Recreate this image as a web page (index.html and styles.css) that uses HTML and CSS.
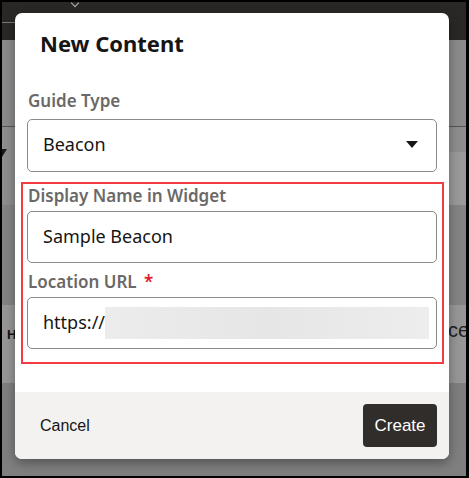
FILE: index.html
```html
<!DOCTYPE html>
<html lang="en">
<head>
<meta charset="utf-8">
<title>New Content</title>
<link rel="stylesheet" href="styles.css">
</head>
<body>
<div class="frame">
  <div class="backdrop">
    <div class="topbar"><span class="chev"></span><span class="topline"></span></div>
    <div class="band b1"></div>
    <div class="band b2"><span class="tri"></span></div>
    <div class="band b3"></div>
    <div class="band b4"><span class="hicon">H</span><span class="ce">ce</span></div>
    <div class="band b5"></div>
  </div>
  <div class="dialog">
    <h1 class="title">New Content</h1>
    <div class="body">
      <div class="field first">
        <label class="label">Guide Type</label>
        <div class="input select"><span>Beacon</span>
          <svg class="caret" width="12" height="7" viewBox="0 0 12 7"><path d="M0 0H12L6 7Z" fill="#161513"/></svg>
        </div>
      </div>
      <div class="highlight">
        <div class="field">
          <label class="label">Display Name in Widget</label>
          <div class="input"><span>Sample Beacon</span></div>
        </div>
        <div class="field">
          <label class="label">Location URL <span class="req">*</span></label>
          <div class="input"><span>https://</span><span class="blur"></span></div>
        </div>
      </div>
    </div>
    <div class="footer">
      <button class="btn cancel">Cancel</button>
      <button class="btn create">Create</button>
    </div>
  </div>
</div>
</body>
</html>
```
FILE: styles.css
```css
* { box-sizing: border-box; }
html, body { margin: 0; padding: 0; }
body { width: 469px; height: 478px; overflow: hidden; background: #000; }
.frame {
  position: relative;
  width: 469px; height: 478px;
  border-style: solid; border-color: #000;
  border-width: 2px 3px 2px 2px;
  overflow: hidden;
}
.backdrop { display: flex; flex-direction: column; height: 100%; }
.topbar { height: 38px; background: #2a2826; position: relative; flex: none; }
.chev {
  position: absolute; left: 70px; top: -2px; width: 6px; height: 6px;
  border-right: 1.5px solid #b9b6b2; border-bottom: 1.5px solid #b9b6b2;
  transform: rotate(45deg);
}
.topline { position: absolute; left: 0; top: 20px; width: 14px; height: 1px; background: #777; }
.band { flex: none; position: relative; }
.b1 { height: 87px; background: #8b8b8b; border-bottom: 1px solid #555; }
.b2 { height: 78px; background: #8e8e8e; }
.b2::after { content: ""; position: absolute; right: 0; top: 25px; width: 30px; height: 53px; background: #9a9a9a; }
.tri {
  position: absolute; left: 0; top: 22px; width: 0; height: 0;
  border-left: 5px solid transparent; border-right: 5px solid transparent; border-top: 8px solid #1a1a1a;
  margin-left: -5px;
}
.b3 { height: 100px; background: #848484; }
.b4 { height: 78px; background: #979797; }
.hicon { position: absolute; left: 5px; top: 22px; font: bold 13px "Liberation Sans", sans-serif; color: #111; }
.ce { position: absolute; left: 446px; top: 14px; font: 20px "Liberation Sans", sans-serif; color: #222; }
.b5 { flex: 1; background: #7f7f7f; }

.dialog {
  position: absolute; left: 13px; top: 11px;
  width: 434px; height: 446px;
  background: #fff; border-radius: 7px;
  box-shadow: 0 4px 12px rgba(0,0,0,0.35);
  display: flex; flex-direction: column;
  overflow: hidden;
  font-family: "Noto Sans", "Open Sans", sans-serif;
}
.title {
  margin: 0; padding: 14px 0 0 25px; height: 78px; flex: none;
  font-size: 22px; font-weight: 700; color: #161513; line-height: 32px;
}
.body { flex: 1; padding: 0 5px 0 6px; display: flex; flex-direction: column; gap: 10px; }
.field { display: flex; flex-direction: column; padding: 0 7px 0 6px; }
.label { font-size: 17px; font-weight: 600; color: #6b6967; line-height: 20px; height: 28px; padding-left: 1px; }
.req { color: #e0202a; margin-left: 3px; }
.input {
  height: 53px; border: 1px solid #8d8b88; border-radius: 5px;
  display: flex; align-items: center; padding: 0 7px 3px 15px;
  font-size: 18px; color: #161513;
}
.select { justify-content: space-between; padding-right: 18px; }
.caret { margin-top: 1px; }
.highlight {
  border: 2px solid #f03c42;
  padding: 2px 0 13px 0;
  display: flex; flex-direction: column; gap: 9px;
}
.highlight .field { padding: 0 5px 0 4px; }
.highlight .input { height: 52px; }
.highlight .label { height: 25px; }
.blur { flex: 1; height: 32px; background: linear-gradient(90deg, #ececec, #e6e6e6 50%, #ededed); margin: 3px 0 0 0; }
.footer {
  flex: none; height: 67px; background: #f3f2f0;
  display: flex; align-items: center; justify-content: space-between;
  padding: 0 12px 0 25px;
}
.btn { font-family: "Liberation Sans", Arial, sans-serif; font-size: 16px; border: none; cursor: pointer; }
.cancel { background: none; color: #161513; padding: 0; }
.create {
  background: #312d2a; color: #fff; border-radius: 4px;
  width: 74px; height: 43px; font-size: 17px; padding: 0;
}
```
